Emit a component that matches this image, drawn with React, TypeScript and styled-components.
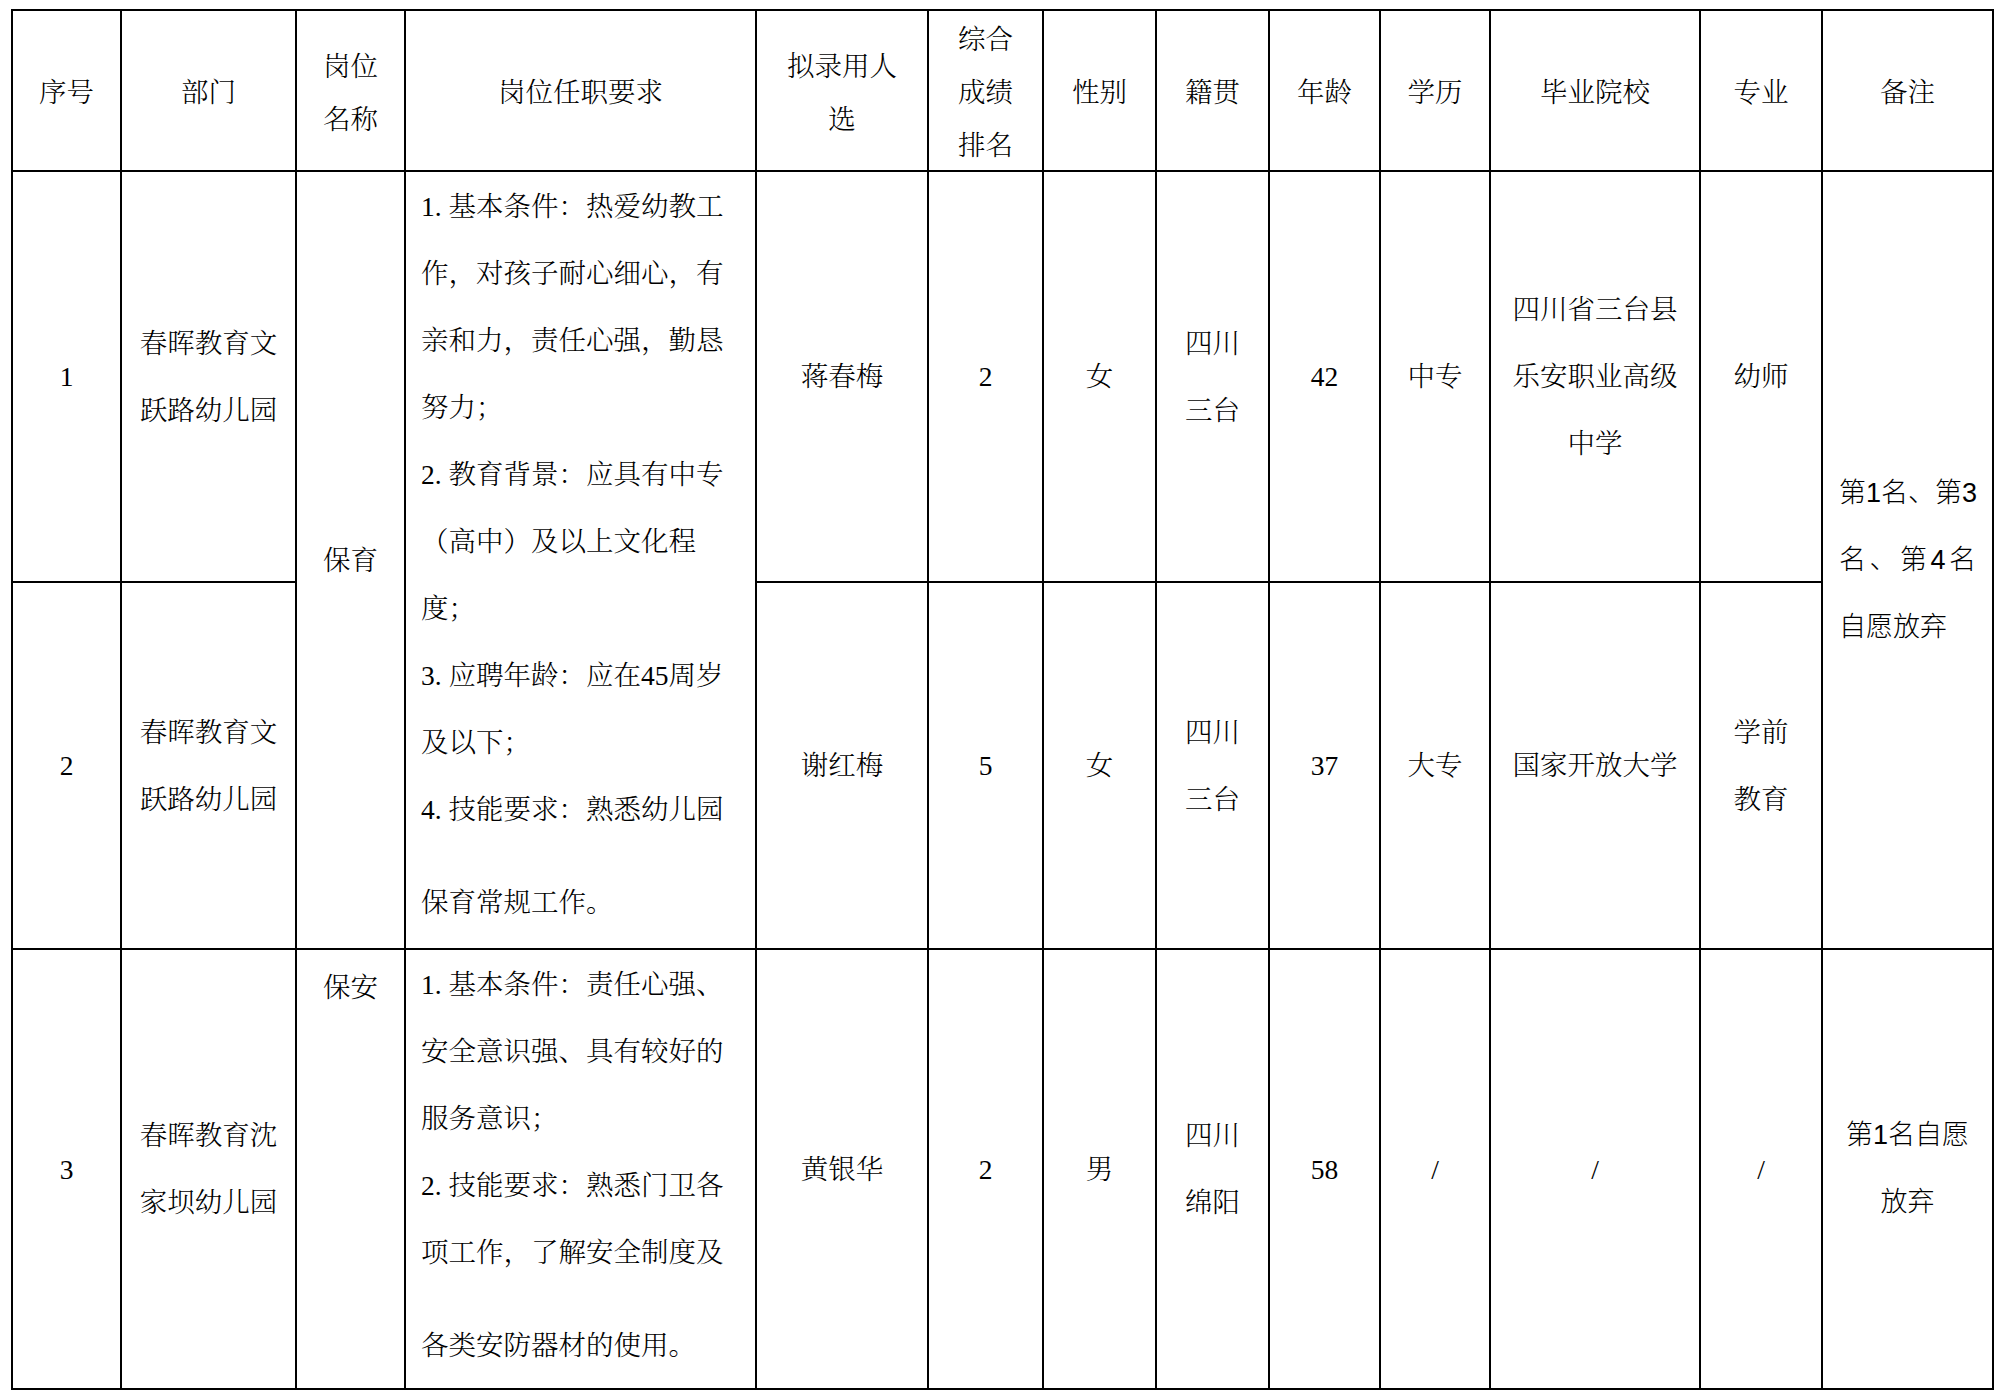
import React from "react";
import styled, { createGlobalStyle } from "styled-components";

const GlobalStyle = createGlobalStyle`
  html, body { margin: 0; padding: 0; background: #ffffff; }
  body { padding: 9px 0 0 11px; }
`;

const SERIF = `"Liberation Serif", "Noto Serif CJK SC", "Noto Sans CJK SC", serif`;
const SANS = `"Liberation Sans", "Noto Sans CJK SC", sans-serif`;

const Sheet = styled.div`
  display: grid;
  grid-template-columns: 109px 175px 109px 351px 172px 115px 113px 113px 111px 110px 210px 122px 171px;
  grid-template-rows: 161px 411px 367px 440px;
  width: max-content;
  border-top: 2px solid #000;
  border-left: 2px solid #000;
  font-family: ${SERIF};
  font-size: 27.5px;
  font-weight: 300;
  color: #000;
`;

const Cell = styled.div<{ $rows?: number; $top?: boolean; $left?: boolean }>`
  box-sizing: border-box;
  border-right: 2px solid #000;
  border-bottom: 2px solid #000;
  grid-row: span ${(p) => p.$rows ?? 1};
  display: flex;
  flex-direction: column;
  justify-content: ${(p) => (p.$top ? "flex-start" : "center")};
  align-items: ${(p) => (p.$left ? "flex-start" : "center")};
  text-align: ${(p) => (p.$left ? "left" : "center")};
  line-height: 67px;
  white-space: nowrap;
`;

const HeadCell = styled(Cell)`
  line-height: 53px;
  padding-top: 4px;
`;

const PostCell = styled(Cell)`
  padding-top: ${(p) => (p.$top ? "4px" : "0")};
`;

const DutyCell = styled(Cell)`
  padding: 1px 10px 0 15px;
`;

const Line = styled.span`
  display: block;
`;

const Marker = styled.span`
  display: inline-block;
  width: 1em;
`;

const Clause = styled.div<{ $gap?: boolean }>`
  margin-top: ${(p) => (p.$gap ? "26px" : "0")};
`;

const NoteCell = styled(Cell)`
  font-family: ${SANS};
  font-size: 27px;
  line-height: 67px;
  padding-left: ${(p) => (p.$left ? "16px" : "0")};
`;

const NoteBlock = styled.div`
  width: 137px;
`;

const NoteLine = styled.span<{ $fill?: boolean }>`
  display: block;
  text-align: left;
  text-align-last: ${(p) => (p.$fill ? "justify" : "left")};
`;

type Lines = string[];

const headers: Lines[] = [
  ["序号"],
  ["部门"],
  ["岗位", "名称"],
  ["岗位任职要求"],
  ["拟录用人", "选"],
  ["综合", "成绩", "排名"],
  ["性别"],
  ["籍贯"],
  ["年龄"],
  ["学历"],
  ["毕业院校"],
  ["专业"],
  ["备注"],
];

type Clause = { mark?: string; lines: Lines };

const nurseDuties: Clause[] = [
  { mark: "1.", lines: ["基本条件：热爱幼教工", "作，对孩子耐心细心，有", "亲和力，责任心强，勤恳", "努力；"] },
  { mark: "2.", lines: ["教育背景：应具有中专", "（高中）及以上文化程", "度；"] },
  { mark: "3.", lines: ["应聘年龄：应在45周岁", "及以下；"] },
  { mark: "4.", lines: ["技能要求：熟悉幼儿园"] },
  { lines: ["保育常规工作。"] },
];

const guardDuties: Clause[] = [
  { mark: "1.", lines: ["基本条件：责任心强、", "安全意识强、具有较好的", "服务意识；"] },
  { mark: "2.", lines: ["技能要求：熟悉门卫各", "项工作，了解安全制度及"] },
  { lines: ["各类安防器材的使用。"] },
];

type Person = {
  no: string;
  dept: Lines;
  name: string;
  rank: string;
  gender: string;
  origin: Lines;
  age: string;
  edu: string;
  school: Lines;
  major: Lines;
};

const people: Person[] = [
  {
    no: "1",
    dept: ["春晖教育文", "跃路幼儿园"],
    name: "蒋春梅",
    rank: "2",
    gender: "女",
    origin: ["四川", "三台"],
    age: "42",
    edu: "中专",
    school: ["四川省三台县", "乐安职业高级", "中学"],
    major: ["幼师"],
  },
  {
    no: "2",
    dept: ["春晖教育文", "跃路幼儿园"],
    name: "谢红梅",
    rank: "5",
    gender: "女",
    origin: ["四川", "三台"],
    age: "37",
    edu: "大专",
    school: ["国家开放大学"],
    major: ["学前", "教育"],
  },
  {
    no: "3",
    dept: ["春晖教育沈", "家坝幼儿园"],
    name: "黄银华",
    rank: "2",
    gender: "男",
    origin: ["四川", "绵阳"],
    age: "58",
    edu: "/",
    school: ["/"],
    major: ["/"],
  },
];

const renderLines = (lines: Lines) =>
  lines.map((l, i) => <Line key={i}>{l}</Line>);

const Duties = ({ clauses }: { clauses: Clause[] }) => (
  <>
    {clauses.map((c, i) => (
      <Clause key={i} $gap={i === clauses.length - 1}>
        {c.lines.map((l, j) => (
          <Line key={j}>
            {j === 0 && c.mark ? <Marker>{c.mark}</Marker> : null}
            {l}
          </Line>
        ))}
      </Clause>
    ))}
  </>
);

const PersonCells = ({ p }: { p: Person }) => (
  <>
    <Cell>{p.name}</Cell>
    <Cell>{p.rank}</Cell>
    <Cell>{p.gender}</Cell>
    <Cell>{renderLines(p.origin)}</Cell>
    <Cell>{p.age}</Cell>
    <Cell>{p.edu}</Cell>
    <Cell>{renderLines(p.school)}</Cell>
    <Cell>{renderLines(p.major)}</Cell>
  </>
);

export default function App() {
  const [a, b, c] = people;
  return (
    <>
      <GlobalStyle />
      <Sheet>
        {headers.map((h, i) => (
          <HeadCell key={i}>{renderLines(h)}</HeadCell>
        ))}

        <Cell>{a.no}</Cell>
        <Cell>{renderLines(a.dept)}</Cell>
        <PostCell $rows={2}>保育</PostCell>
        <DutyCell $rows={2} $top $left>
          <Duties clauses={nurseDuties} />
        </DutyCell>
        <PersonCells p={a} />
        <NoteCell $rows={2} $left>
          <NoteBlock>
            <NoteLine $fill>第1名、第3</NoteLine>
            <NoteLine $fill>名、第4名</NoteLine>
            <NoteLine>自愿放弃</NoteLine>
          </NoteBlock>
        </NoteCell>

        <Cell>{b.no}</Cell>
        <Cell>{renderLines(b.dept)}</Cell>
        <PersonCells p={b} />

        <Cell>{c.no}</Cell>
        <Cell>{renderLines(c.dept)}</Cell>
        <PostCell $top>保安</PostCell>
        <DutyCell $top $left>
          <Duties clauses={guardDuties} />
        </DutyCell>
        <PersonCells p={c} />
        <NoteCell>
          <Line>第1名自愿</Line>
          <Line>放弃</Line>
        </NoteCell>
      </Sheet>
    </>
  );
}
